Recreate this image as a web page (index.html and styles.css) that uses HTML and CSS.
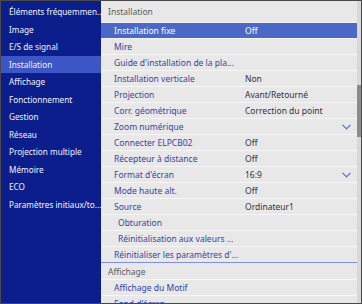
FILE: index.html
```html
<!DOCTYPE html>
<html lang="fr">
<head>
    <meta charset="UTF-8">
    <title>Installation</title>
    <link rel="stylesheet" href="styles.css">
</head>
<body>
    <div class="frame">
        <ul class="sidebar">
            <li>Éléments fréquemmen...</li>
            <li>Image</li>
            <li>E/S de signal</li>
            <li class="active">Installation</li>
            <li>Affichage</li>
            <li>Fonctionnement</li>
            <li>Gestion</li>
            <li>Réseau</li>
            <li>Projection multiple</li>
            <li>Mémoire</li>
            <li>ECO</li>
            <li>Paramètres initiaux/to...</li>
        </ul>

        <div class="content">
            <div class="section-title">Installation</div>
            <div class="row selected"><span class="label">Installation fixe</span><span class="value">Off</span></div>
            <div class="row"><span class="label">Mire</span></div>
            <div class="row"><span class="label">Guide d'installation de la pla...</span></div>
            <div class="row"><span class="label">Installation verticale</span><span class="value">Non</span></div>
            <div class="row"><span class="label">Projection</span><span class="value">Avant/Retourné</span></div>
            <div class="row"><span class="label">Corr. géométrique</span><span class="value">Correction du point</span></div>
            <div class="row"><span class="label">Zoom numérique</span><span class="chevron"><svg width="9" height="6" viewBox="0 0 9 6"><path d="M0.5 0.8 L4.5 4.8 L8.5 0.8" fill="none" stroke="#4a5fc0" stroke-width="1.1"/></svg></span></div>
            <div class="row"><span class="label">Connecter ELPCB02</span><span class="value">Off</span></div>
            <div class="row"><span class="label">Récepteur à distance</span><span class="value">Off</span></div>
            <div class="row"><span class="label">Format d'écran</span><span class="value">16:9</span><span class="chevron"><svg width="9" height="6" viewBox="0 0 9 6"><path d="M0.5 0.8 L4.5 4.8 L8.5 0.8" fill="none" stroke="#4a5fc0" stroke-width="1.1"/></svg></span></div>
            <div class="row"><span class="label">Mode haute alt.</span><span class="value">Off</span></div>
            <div class="row"><span class="label">Source</span><span class="value">Ordinateur1</span></div>
            <div class="row sub"><span class="label">Obturation</span></div>
            <div class="row sub"><span class="label">Réinitialisation aux valeurs ...</span></div>
            <div class="row last"><span class="label">Réinitialiser les paramètres d'...</span></div>
            <div class="section-title small">Affichage</div>
            <div class="row"><span class="label">Affichage du Motif</span></div>
            <div class="row"><span class="label">Fond d'écran</span></div>
        </div>

        <div class="scrollbar"><div class="thumb"></div></div>
    </div>
</body>
</html>
```

FILE: styles.css
```css
* {
    margin: 0;
    padding: 0;
    box-sizing: border-box;
}

body {
    font-family: "Noto Sans", "Open Sans", sans-serif;
    font-size: 8.5px;
    background-color: #e8e8e8;
}

.frame {
    width: 362px;
    height: 304px;
    border: 1px solid #4a4a4a;
    display: flex;
    overflow: hidden;
}

/* Left menu */
.sidebar {
    list-style: none;
    width: 100px;
    flex-shrink: 0;
    background-color: #0c1e8c;
    padding-top: 2px;
    font-size: 8.2px;
}

.sidebar li {
    height: 17.5px;
    line-height: 17.5px;
    padding-left: 8px;
    color: #f2f4ff;
    white-space: nowrap;
}

.sidebar li.active {
    background-color: #3d56c6;
}

/* Right panel */
.content {
    flex: 1;
    background-color: #e8e8e8;
    overflow: hidden;
}

.section-title {
    height: 22px;
    line-height: 21px;
    padding-left: 7px;
    color: #5c5c5c;
    border-bottom: 1px solid #f6f6f6;
}

.section-title.small {
    height: 17px;
    line-height: 17px;
}

.row {
    height: 16px;
    display: flex;
    align-items: center;
    padding-left: 13px;
    border-bottom: 1px solid #f6f6f6;
    color: #3344aa;
    white-space: nowrap;
}

.row.sub {
    padding-left: 17px;
}

.row.last {
    border-bottom: 1px solid #7f90d8;
}

.row .label {
    width: 131px;
}

.row.sub .label {
    width: 127px;
}

.row .value {
    color: #333;
}

.row .chevron {
    margin-left: auto;
    margin-right: 6px;
    display: flex;
}

.row.selected {
    background-color: #4b68c7;
    color: #fff;
}

.row.selected .value {
    color: #fff;
}

/* Scrollbar */
.scrollbar {
    width: 4px;
    flex-shrink: 0;
    background-color: #d8d8d8;
}

.thumb {
    margin-top: 84px;
    height: 52px;
    background-color: #8c8c8c;
}
```
